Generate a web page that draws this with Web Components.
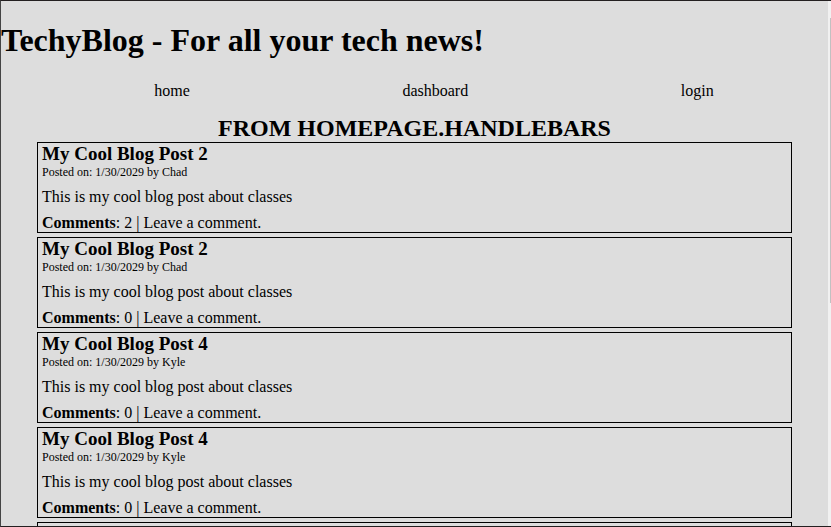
<!DOCTYPE html>
<html lang="en">
<head>
<meta charset="utf-8">
<meta name="viewport" content="width=device-width, initial-scale=1">
<title>TechyBlog</title>
<style>
body { margin: 0; background: #ddd; color: #000; font: 16px/18px "Liberation Serif", "Times New Roman", serif; }
</style>
</head>
<body>
<blog-frame>
  <blog-header>TechyBlog - For all your tech news!</blog-header>
  <blog-nav></blog-nav>
  <blog-feed>
    <span slot="heading">FROM HOMEPAGE.HANDLEBARS</span>
    <blog-post author="Chad" comments="2">My Cool Blog Post 2</blog-post>
    <blog-post author="Chad" comments="0">My Cool Blog Post 2</blog-post>
    <blog-post author="Kyle" comments="0">My Cool Blog Post 4</blog-post>
    <blog-post author="Kyle" comments="0">My Cool Blog Post 4</blog-post>
    <blog-card></blog-card>
  </blog-feed>
</blog-frame>
<script>
function define(name, html, setup) {
  const template = document.createElement('template');
  template.innerHTML = html;
  customElements.define(name, class extends HTMLElement {
    constructor() {
      super();
      this.attachShadow({ mode: 'open' }).append(template.content.cloneNode(true));
    }
    connectedCallback() { if (setup) setup(this, this.shadowRoot); }
  });
}

define('blog-frame', `
<style>
  :host { display: flex; box-sizing: border-box; height: 100vh; border: 1px solid #231f20; border-right: 0; border-left-color: #444; }
  main { flex: 1; min-width: 0; overflow: hidden; }
  .rail { width: 3px; background: #f1f1f1; display: grid; grid-template-rows: 17fr 285fr 223fr; justify-items: end; }
  .thumb { grid-row: 2; width: 1px; background: #c1c1c1; }
</style>
<main><slot></slot></main>
<div class="rail" aria-hidden="true"><div class="thumb"></div></div>`);

define('blog-header', `
<style>
  :host { display: block; }
  h1 { margin: 0; padding: 21px 0 24px; font-size: 32px; line-height: 36px; }
</style>
<h1><slot></slot></h1>`);

define('blog-nav', `
<style>
  :host { display: block; }
  ul { display: flex; justify-content: space-around; list-style: none; margin: 0; padding: 0 8px 0 47px; }
  a { color: inherit; text-decoration: none; }
</style>
<nav><ul>
  <li><a href="#home">home</a></li>
  <li><a href="#dashboard">dashboard</a></li>
  <li><a href="#login">login</a></li>
</ul></nav>`);

define('blog-feed', `
<style>
  :host { display: flex; flex-direction: column; gap: 4px; padding: 14px 36px 0; }
  h2 { margin: 0 0 -4px; font-size: 24px; line-height: 28px; text-align: center; }
</style>
<h2><slot name="heading"></slot></h2>
<slot></slot>`);

define('blog-card', `
<style>
  :host { display: block; border: 1px solid #000; padding: 0 4px; min-height: 89px; }
</style>
<slot></slot>`);

define('blog-post', `
<style>
  :host { display: block; }
  h3 { margin: 0; font-size: 19px; line-height: 22px; }
  .meta { font-size: 12px; line-height: 14px; }
  p { margin: 9px 0 8px; }
  a { color: inherit; text-decoration: none; }
</style>
<blog-card>
  <article>
    <h3><slot></slot></h3>
    <div class="meta">Posted on: 1/30/2029 by <span id="author"></span></div>
    <p>This is my cool blog post about classes</p>
    <div><b>Comments</b>: <span id="count"></span> | <a href="#comment">Leave a comment.</a></div>
  </article>
</blog-card>`, (host, root) => {
  root.getElementById('author').textContent = host.getAttribute('author');
  root.getElementById('count').textContent = host.getAttribute('comments');
});
</script>
</body>
</html>
